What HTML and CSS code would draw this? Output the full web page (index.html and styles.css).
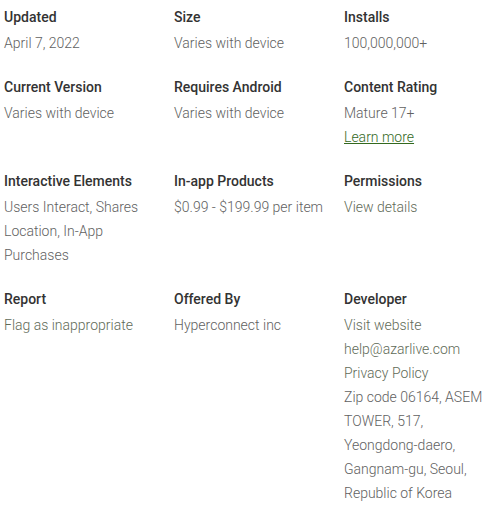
FILE: index.html
```html
<!DOCTYPE html>
<html>
<head>
<meta charset="utf-8">
<link rel="stylesheet" href="styles.css">
</head>
<body>
<div class="info">
  <div class="item"><div class="label">Updated</div><div class="value">April 7, 2022</div></div>
  <div class="item"><div class="label">Size</div><div class="value">Varies with device</div></div>
  <div class="item"><div class="label">Installs</div><div class="value">100,000,000+</div></div>

  <div class="item"><div class="label">Current Version</div><div class="value">Varies with device</div></div>
  <div class="item"><div class="label">Requires Android</div><div class="value">Varies with device</div></div>
  <div class="item"><div class="label">Content Rating</div><div class="value"><div>Mature 17+</div><a class="learn" href="#">Learn more</a></div></div>

  <div class="item"><div class="label">Interactive Elements</div><div class="value">Users Interact, Shares Location, In-App Purchases</div></div>
  <div class="item"><div class="label">In-app Products</div><div class="value">$0.99 - $199.99 per item</div></div>
  <div class="item"><div class="label">Permissions</div><div class="value"><a class="link" href="#">View details</a></div></div>

  <div class="item"><div class="label">Report</div><div class="value"><a class="link" href="#">Flag as inappropriate</a></div></div>
  <div class="item"><div class="label">Offered By</div><div class="value">Hyperconnect inc</div></div>
  <div class="item"><div class="label">Developer</div><div class="value">
    <div><a class="link" href="#">Visit website</a></div>
    <div><a class="link" href="#">help@azarlive.com</a></div>
    <div><a class="link" href="#">Privacy Policy</a></div>
    <div>Zip code 06164, ASEM TOWER, 517, Yeongdong-daero, Gangnam-gu, Seoul, Republic of Korea</div>
  </div></div>
</div>
</body>
</html>
```
FILE: styles.css
```css
html, body {
  margin: 0;
  padding: 0;
  background: #fff;
}
body {
  font-family: Roboto, "Liberation Sans", sans-serif;
  font-size: 14px;
}
.info {
  display: grid;
  grid-template-columns: 156px 156px 145px;
  column-gap: 14px;
  padding: 5px 0 0 4px;
}
.item {
  margin-bottom: 20px;
}
.label {
  color: #333;
  font-weight: 500;
  line-height: 24px;
  margin-bottom: 2px;
}
.value {
  color: #616161;
  font-weight: 300;
  line-height: 24px;
}
.link {
  color: #5f6b58;
  text-decoration: none;
}
.learn {
  color: #33691e;
  text-decoration: underline;
}
```
